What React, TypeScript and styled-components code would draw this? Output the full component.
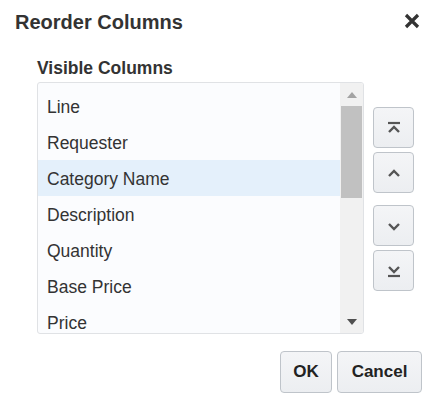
import styled, { createGlobalStyle } from "styled-components"

const GlobalStyle = createGlobalStyle`
    html, body {
        margin: 0;
        padding: 0;
        background: #ffffff;
        font-family: "Liberation Sans", Arial, sans-serif;
        color: #333333;
    }
`

const columns = [
    "Line",
    "Requester",
    "Category Name",
    "Description",
    "Quantity",
    "Base Price",
    "Price",
]

const selected = "Category Name"

export default function App() {
    return (
        <>
            <GlobalStyle />
            <Dialog>
                <Header>
                    <Title>Reorder Columns</Title>
                    <CloseButton aria-label="Close">
                        <svg width="16" height="16" viewBox="0 0 16 16">
                            <path d="M2 2 L14 14 M14 2 L2 14" stroke="#333" strokeWidth="3.2" strokeLinecap="butt" />
                        </svg>
                    </CloseButton>
                </Header>

                <Body>
                    <ListColumn>
                        <Label>Visible Columns</Label>
                        <ListBox>
                            <Items>
                                {columns.map((name) => (
                                    <Item key={name} $active={name === selected}>{name}</Item>
                                ))}
                            </Items>
                            <ScrollTrack>
                                <Arrow>
                                    <svg width="10" height="6" viewBox="0 0 10 6"><path d="M0 6 L5 0 L10 6 Z" fill="#a3a3a3" /></svg>
                                </Arrow>
                                <Thumb />
                                <Spacer />
                                <Arrow>
                                    <svg width="10" height="6" viewBox="0 0 10 6"><path d="M0 0 L5 6 L10 0 Z" fill="#505050" /></svg>
                                </Arrow>
                            </ScrollTrack>
                        </ListBox>
                    </ListColumn>

                    <MoveColumn>
                        <MoveGroup>
                            <MoveButton aria-label="Move to top">
                                <svg width="16" height="16" viewBox="0 0 16 16">
                                    <path d="M2 3 H14" stroke="#555" strokeWidth="2.2" />
                                    <path d="M3 12 L8 7 L13 12" stroke="#555" strokeWidth="2.4" fill="none" />
                                </svg>
                            </MoveButton>
                            <MoveButton aria-label="Move up">
                                <svg width="16" height="16" viewBox="0 0 16 16">
                                    <path d="M3 11 L8 6 L13 11" stroke="#555" strokeWidth="2.4" fill="none" />
                                </svg>
                            </MoveButton>
                        </MoveGroup>
                        <MoveGroup>
                            <MoveButton aria-label="Move down">
                                <svg width="16" height="16" viewBox="0 0 16 16">
                                    <path d="M3 6 L8 11 L13 6" stroke="#555" strokeWidth="2.4" fill="none" />
                                </svg>
                            </MoveButton>
                            <MoveButton aria-label="Move to bottom">
                                <svg width="16" height="16" viewBox="0 0 16 16">
                                    <path d="M3 4 L8 9 L13 4" stroke="#555" strokeWidth="2.4" fill="none" />
                                    <path d="M2 13 H14" stroke="#555" strokeWidth="2.2" />
                                </svg>
                            </MoveButton>
                        </MoveGroup>
                    </MoveColumn>
                </Body>

                <Footer>
                    <ActionButton $width={52}>OK</ActionButton>
                    <ActionButton $width={85}>Cancel</ActionButton>
                </Footer>
            </Dialog>
        </>
    )
}

const Dialog = styled.div`
    width: 438px;
    height: 404px;
    box-sizing: border-box;
    display: flex;
    flex-direction: column;
`

const Header = styled.div`
    display: flex;
    align-items: center;
    justify-content: space-between;
    height: 42px;
    padding: 0 18px 0 15px;
`

const Title = styled.h1`
    margin: 0;
    font-size: 20px;
    font-weight: 700;
    color: #333;
    line-height: 1;
    margin-top: 2px;
`

const CloseButton = styled.div`
    width: 16px;
    height: 16px;
    display: flex;
    align-items: center;
    justify-content: center;
`

const Body = styled.div`
    display: flex;
    padding: 16px 0 0 37px;
    gap: 9px;
`

const ListColumn = styled.div`
    display: flex;
    flex-direction: column;
`

const Label = styled.div`
    font-size: 17.5px;
    font-weight: 700;
    color: #333;
    line-height: 20px;
    height: 24px;
`

const ListBox = styled.div`
    width: 327px;
    height: 252px;
    box-sizing: border-box;
    border: 1px solid #e0e2e5;
    border-radius: 3px;
    background: #fbfcfe;
    display: flex;
    overflow: hidden;
`

const Items = styled.div`
    flex: 1;
    padding-top: 5px;
    overflow: hidden;
`

const Item = styled.div<{ $active: boolean }>`
    height: 36px;
    box-sizing: border-box;
    display: flex;
    align-items: center;
    padding: 3px 0 0 9px;
    font-size: 17.5px;
    color: #333;
    background: ${(p) => (p.$active ? "#e4f0fb" : "transparent")};
`

const ScrollTrack = styled.div`
    width: 23px;
    background: #f1f1f1;
    display: flex;
    flex-direction: column;
    align-items: center;
`

const Arrow = styled.div`
    height: 23px;
    display: flex;
    align-items: center;
    justify-content: center;
`

const Thumb = styled.div`
    width: 21px;
    height: 92px;
    background: #c1c1c1;
`

const Spacer = styled.div`
    flex: 1;
`

const MoveColumn = styled.div`
    display: flex;
    flex-direction: column;
    gap: 12px;
    padding-top: 49px;
`

const MoveGroup = styled.div`
    display: flex;
    flex-direction: column;
    gap: 4px;
`

const MoveButton = styled.div`
    width: 41px;
    height: 41px;
    box-sizing: border-box;
    border: 1px solid #bfc4ca;
    border-radius: 4px;
    background: linear-gradient(#f4f5f7, #eceef1);
    display: flex;
    align-items: center;
    justify-content: center;
`

const Footer = styled.div`
    display: flex;
    justify-content: flex-end;
    gap: 5px;
    padding: 17px 16px 0 0;
`

const ActionButton = styled.div<{ $width: number }>`
    width: ${(p) => p.$width}px;
    height: 42px;
    box-sizing: border-box;
    border: 1px solid #bfc4ca;
    border-radius: 4px;
    background: linear-gradient(#f4f5f7, #eceef1);
    display: flex;
    align-items: center;
    justify-content: center;
    font-size: 17px;
    font-weight: 700;
    color: #222;
`
